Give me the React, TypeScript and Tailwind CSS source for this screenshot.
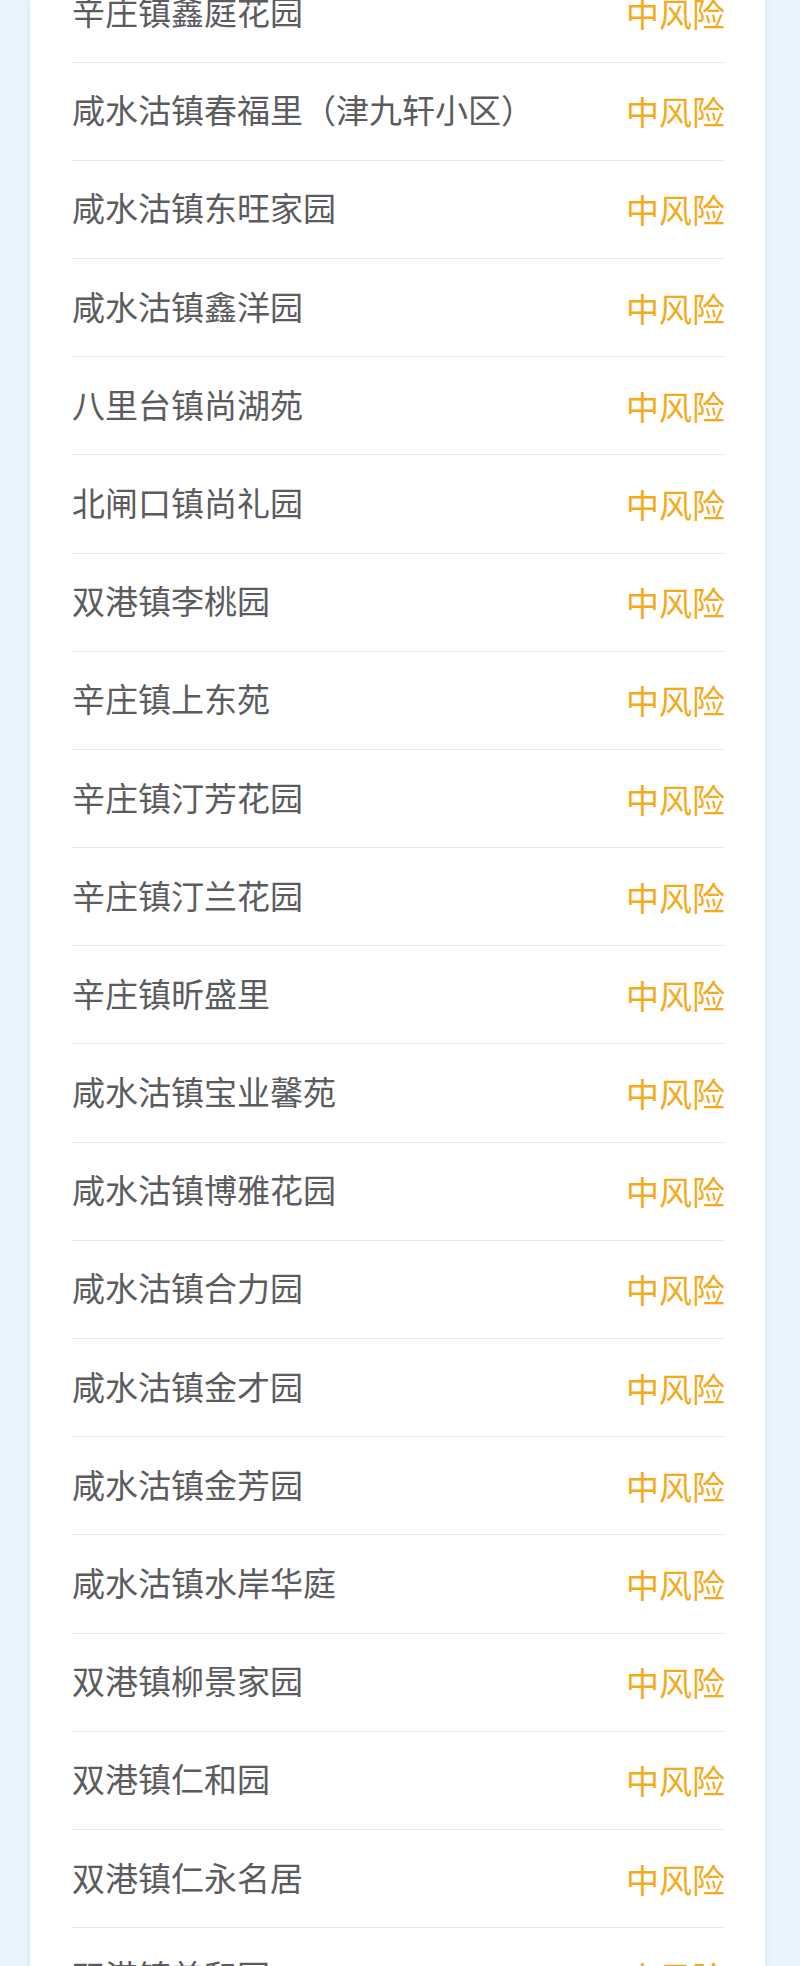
import React from "react";

const rows = [
  "辛庄镇鑫庭花园",
  "咸水沽镇春福里（津九轩小区）",
  "咸水沽镇东旺家园",
  "咸水沽镇鑫洋园",
  "八里台镇尚湖苑",
  "北闸口镇尚礼园",
  "双港镇李桃园",
  "辛庄镇上东苑",
  "辛庄镇汀芳花园",
  "辛庄镇汀兰花园",
  "辛庄镇昕盛里",
  "咸水沽镇宝业馨苑",
  "咸水沽镇博雅花园",
  "咸水沽镇合力园",
  "咸水沽镇金才园",
  "咸水沽镇金芳园",
  "咸水沽镇水岸华庭",
  "双港镇柳景家园",
  "双港镇仁和园",
  "双港镇仁永名居",
  "双港镇美和园",
];

export default function App() {
  return (
    <div
      className="w-[800px] h-[1966px] overflow-hidden bg-[#eaf4fc]"
      style={{ fontFamily: '"Noto Sans CJK SC", "Noto Sans", sans-serif' }}
    >
      <div className="ml-[30px] w-[735px] bg-white shadow-[0_0_6px_rgba(120,160,180,0.25)] pr-[40px] pl-[42px] flex flex-col">
        <div className="-mt-[35.6px]">
          {rows.map((name, i) => (
            <div
              key={i}
              className="h-[98.2px] border-b border-[#e9e9e9] flex items-center justify-between"
            >
              <span className="text-[33px] leading-none text-[#5c5c60] -mt-[3px]">{name}</span>
              <span className="text-[33px] leading-none text-[#f5aa1c] mt-[1px]">中风险</span>
            </div>
          ))}
        </div>
      </div>
    </div>
  );
}
